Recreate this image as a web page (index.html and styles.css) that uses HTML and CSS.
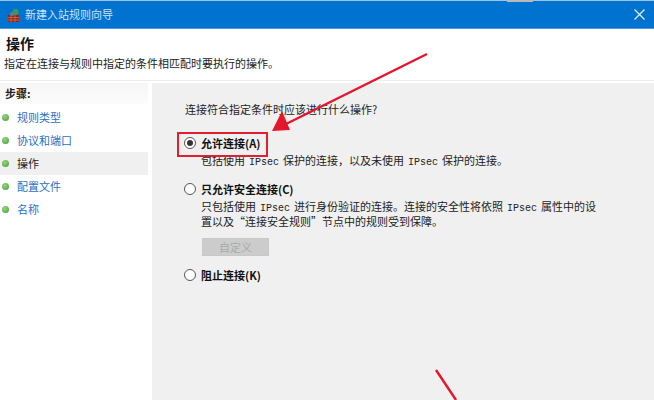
FILE: index.html
```html
<!DOCTYPE html>
<html lang="zh-CN">

<head>
    <meta charset="UTF-8">
    <title>新建入站规则向导</title>
    <link rel="stylesheet" href="styles.css">
</head>

<body>
    <div class="wizard">
        <div class="titlebar">
            <svg class="app-icon" width="16" height="16" viewBox="0 0 16 16">
                <rect x="3" y="8" width="11" height="7" fill="#8c2a1e"/>
                <path d="M3 10.5h11M3 13h11M6 8v7M10 8v7" stroke="#d9705a" stroke-width="0.7"/>
                <circle cx="10.5" cy="5" r="3" fill="#3f9a4c"/>
                <circle cx="7" cy="7" r="2" fill="#5a7fa8"/>
            </svg>
            <span class="title-text">新建入站规则向导</span>
            <svg class="close-icon" width="11" height="11" viewBox="0 0 11 11">
                <path d="M0.5 0.5l10 10M10.5 0.5l-10 10" stroke="#e4f0fb" stroke-width="1.2" fill="none"/>
            </svg>
        </div>

        <div class="header">
            <h1>操作</h1>
            <p>指定在连接与规则中指定的条件相匹配时要执行的操作。</p>
        </div>

        <div class="main">
            <div class="steps">
                <div class="steps-head">步骤:</div>
                <ul>
                    <li><a href="#">规则类型</a></li>
                    <li><a href="#">协议和端口</a></li>
                    <li class="current"><a href="#">操作</a></li>
                    <li><a href="#">配置文件</a></li>
                    <li><a href="#">名称</a></li>
                </ul>
            </div>

            <div class="content">
                <p class="question">连接符合指定条件时应该进行什么操作?</p>

                <div class="option first">
                    <span class="radio checked"></span>
                    <label>允许连接(A)</label>
                </div>
                <p class="note first-note">包括使用 <span class="mono">IPsec</span> 保护的连接，以及未使用 <span class="mono">IPsec</span> 保护的连接。</p>

                <div class="option second">
                    <span class="radio"></span>
                    <label>只允许安全连接(C)</label>
                </div>
                <p class="note">只包括使用 <span class="mono">IPsec</span> 进行身份验证的连接。连接的安全性将依照 <span class="mono">IPsec</span> 属性中的设<br>置以及“连接安全规则”节点中的规则受到保障。</p>
                <button class="custom" disabled>自定义</button>

                <div class="option third">
                    <span class="radio"></span>
                    <label>阻止连接(K)</label>
                </div>
            </div>
        </div>

        <!-- 红色标注 -->
        <div class="top-bit"></div>
        <div class="mark-box"></div>
        <svg class="marks" width="654" height="400" viewBox="0 0 654 400">
            <path d="M427 54L286 124" stroke="#e3162b" stroke-width="2.4" fill="none"/>
            <path d="M272 131L282 111L290 130Z" fill="#e3162b"/>
            <path d="M436 370L456 400" stroke="#e3162b" stroke-width="2.4" fill="none"/>
        </svg>
    </div>
</body>

</html>
```

FILE: styles.css
```css
* {
    box-sizing: border-box;
}

html,
body {
    margin: 0;
    padding: 0;
}

body {
    width: 654px;
    height: 400px;
    overflow: hidden;
    background-color: white;
    font: normal 11px/11px "Noto Sans CJK SC", "Liberation Sans", sans-serif;
    color: #222;
}

.wizard {
    position: relative;
    display: flex;
    flex-direction: column;
    height: 400px;
    border-top: 1px solid #9fc4e8;
}

.titlebar {
    display: flex;
    align-items: center;
    flex: none;
    height: 28px;
    padding: 0 9px 0 5px;
    background-color: #0072d0;
    border-bottom: 1px solid #4a9be0;
}

.title-text {
    margin-left: 4px;
    color: #cfe4f8;
}

.close-icon {
    margin-left: auto;
}

.header {
    flex: none;
    height: 52px;
    margin-bottom: 2px;
    padding-top: 6px;
    border-bottom: 1px solid #ececec;
}

.header h1 {
    margin: 0 0 0 6px;
    font-size: 14px;
    line-height: 16px;
    font-weight: bold;
    color: #111;
}

.header p {
    margin: 5px 0 0 4px;
    line-height: 14px;
}

.main {
    display: flex;
    flex: 1;
}

.steps {
    flex: none;
    width: 152px;
    padding-right: 4px;
}

.steps-head {
    height: 21px;
    padding: 3px 0 0 5px;
    font-weight: bold;
    line-height: 14px;
    background: linear-gradient(#f6f6f6, #fcfcfc);
}

ul {
    margin: 0;
    padding: 0;
    list-style: none;
}

li {
    position: relative;
    height: 23px;
    padding-left: 17px;
    line-height: 23px;
}

li:first-child {
    margin-top: 2px;
}

li::before {
    content: "";
    position: absolute;
    left: 2px;
    top: 8px;
    width: 7px;
    height: 7px;
    border-radius: 50%;
    background: radial-gradient(circle at 40% 35%, #9ad57a, #3f9a3a);
}

li a {
    color: #2a6fc4;
    text-decoration: none;
}

li.current {
    background-color: #f0f0f0;
}

li.current a {
    color: #222;
}

.content {
    flex: 1;
    padding: 19px 0 0 32px;
    background-color: #f0f0f0;
}

.content p {
    margin: 0;
}

.content .question {
    margin-left: 1px;
    line-height: 14px;
}

.option {
    display: flex;
    align-items: center;
    height: 14px;
}

.option label {
    margin-left: 5px;
    font-weight: bold;
    color: #111;
}

.option.first {
    margin-top: 20px;
}

.option.second {
    margin-top: 13px;
}

.option.third {
    margin-top: 12px;
}

.radio {
    position: relative;
    flex: none;
    width: 12px;
    height: 12px;
    border: 1px solid #555;
    border-radius: 50%;
    background-color: white;
}

.radio.checked::after {
    content: "";
    position: absolute;
    left: 2px;
    top: 2px;
    width: 6px;
    height: 6px;
    border-radius: 50%;
    background-color: #333;
}

.content .note {
    margin: 4px 0 0 17px;
    white-space: nowrap;
    line-height: 12px;
}

.content .first-note {
    margin-top: 4px;
}

.mono {
    margin: 0 1.5px;
    font-family: "Liberation Mono", monospace;
    font-size: 10px;
}

.custom {
    display: block;
    width: 67px;
    height: 18px;
    margin: 11px 0 0 18px;
    padding: 0;
    border: 1px solid #c8c8c8;
    background-color: #cccccc;
    color: #aaaaaa;
    font: inherit;
}

.top-bit {
    position: absolute;
    left: 507px;
    top: -1px;
    width: 26px;
    height: 2px;
    background-color: #b9b9b9;
}

.mark-box {
    position: absolute;
    left: 177px;
    top: 131px;
    width: 91px;
    height: 25px;
    border: 2px solid #e0202c;
}

.marks {
    position: absolute;
    left: 0;
    top: -1px;
    pointer-events: none;
}
```
